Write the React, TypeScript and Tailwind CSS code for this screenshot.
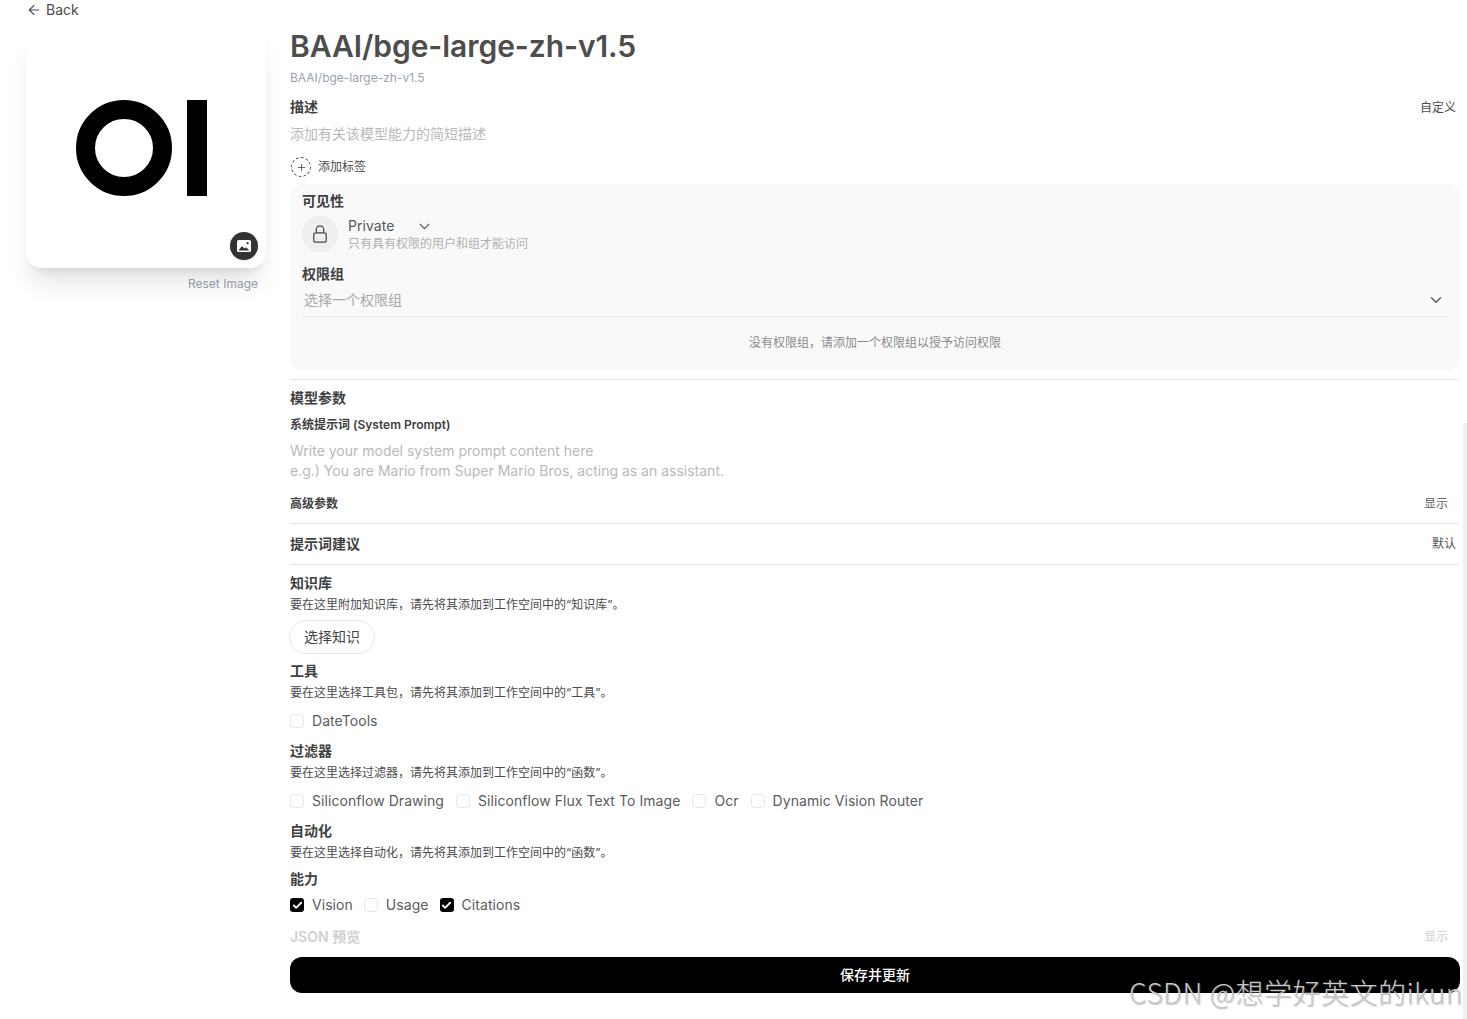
import { ArrowLeft, ChevronDown, Check, Plus } from "lucide-react"

const Heading = ({ className = "", children }: { className?: string; children: React.ReactNode }) => (
  <div className={`text-sm leading-5 font-semibold text-[#404040] ${className}`}>{children}</div>
)

const Desc = ({ children }: { children: React.ReactNode }) => (
  <div className="mt-1 text-xs leading-4 text-[#4b4b4b]">{children}</div>
)

function CheckItem({ label, checked = false }: { label: string; checked?: boolean }) {
  return (
    <label className="flex items-center gap-2">
      {checked ? (
        <span className="flex size-[14px] items-center justify-center rounded-[3px] bg-black text-white">
          <Check size={11} strokeWidth={4} />
        </span>
      ) : (
        <span className="size-[14px] rounded-[4px] border border-gray-200 bg-white" />
      )}
      <span className="text-sm leading-5 tracking-[0.06px] text-[#5b5b5b]">{label}</span>
    </label>
  )
}

export default function App() {
  return (
    <div className="relative h-[1019px] overflow-hidden bg-white font-['Inter','Noto_Sans_CJK_SC',sans-serif]">
      <div className="flex h-5 items-center gap-1 pl-[26px] text-sm text-[#4b4b4b]">
        <ArrowLeft size={16} strokeWidth={1.75} />
        <span>Back</span>
      </div>

      <div className="mt-2 flex gap-6 pr-[7px] pl-[26px]">
        {/* Avatar */}
        <div className="w-[240px] shrink-0">
          <div className="relative flex h-[240px] items-center justify-center rounded-2xl bg-white shadow-xl">
            <svg width="132" height="96" viewBox="0 0 132 96" className="mr-2">
              <circle cx="48" cy="48" r="38.5" fill="none" stroke="#000" strokeWidth="19" />
              <rect x="111" y="0" width="20" height="96" fill="#000" />
            </svg>
            <div className="absolute right-2 bottom-2 flex size-7 items-center justify-center rounded-full bg-[#333] shadow-sm">
              <svg width="18" height="18" viewBox="0 0 18 18">
                <rect x="2" y="3" width="14" height="12" rx="1.5" fill="#fff" />
                <path d="M3.5 13.5 7 9l2.4 2.6L11 10.2l3.5 3.3z" fill="#333" />
                <circle cx="12.6" cy="6.2" r="1.1" fill="#333" />
              </svg>
            </div>
          </div>
          <div className="mt-2 pr-2 text-right text-xs leading-4 text-gray-400">Reset Image</div>
        </div>

        {/* Form */}
        <div className="min-w-0 flex-1">
          <h1 className="text-3xl leading-9 font-semibold tracking-[-0.05px] text-[#4d4d4d]">BAAI/bge-large-zh-v1.5</h1>
          <div className="mt-1.5 text-xs leading-4 text-gray-400">BAAI/bge-large-zh-v1.5</div>

          <div className="mt-[11px] flex items-center justify-between">
            <Heading>描述</Heading>
            <span className="pt-0.5 pr-1 text-xs text-[#4b4b4b]">自定义</span>
          </div>
          <div className="mt-[7px] text-sm leading-5 text-[#b9b9b9]">添加有关该模型能力的简短描述</div>

          <div className="mt-[13px] flex h-5 items-center gap-[7px] pl-px">
            <span className="flex size-5 items-center justify-center rounded-full border border-dashed border-[#444] text-[#444]">
              <Plus size={11} strokeWidth={1.75} />
            </span>
            <span className="text-xs text-[#4b4b4b]">添加标签</span>
          </div>

          {/* Access */}
          <div className="mt-[7px] rounded-xl bg-[#f9f9f9] px-3 pt-[7px] pb-5">
            <Heading>可见性</Heading>
            <div className="mt-[5px] flex items-center gap-2.5">
              <div className="flex size-9 items-center justify-center rounded-full bg-[#eeeeee] text-[#444]">
                <svg width="20" height="20" viewBox="0 0 24 24" fill="none" stroke="currentColor" strokeWidth="1.5" strokeLinecap="round" strokeLinejoin="round">
                  <path d="M16.5 10.5V6.75a4.5 4.5 0 1 0-9 0v3.75m-.75 11.25h10.5a2.25 2.25 0 0 0 2.25-2.25v-6.75a2.25 2.25 0 0 0-2.25-2.25H6.75a2.25 2.25 0 0 0-2.25 2.25v6.75a2.25 2.25 0 0 0 2.25 2.25Z" />
                </svg>
              </div>
              <div>
                <div className="flex items-center">
                  <span className="w-[68px] text-sm leading-5 tracking-[0.06px] text-[#555]">Private</span>
                  <ChevronDown size={17} strokeWidth={1.75} className="text-[#4b5563]" />
                </div>
                <div className="text-xs leading-4 text-[#b0b0b0]">只有具有权限的用户和组才能访问</div>
              </div>
            </div>

            <Heading className="mt-3">权限组</Heading>
            <div className="mt-1.5 flex items-center justify-between border-b border-gray-200 pr-[3px] pb-1.5 pl-0.5">
              <span className="text-sm leading-5 text-[#a8a8a8]">选择一个权限组</span>
              <ChevronDown size={18} strokeWidth={1.75} className="text-[#4b5563]" />
            </div>
            <div className="mt-[18px] text-center text-xs leading-4 text-[#8a8a8a]">
              没有权限组，请添加一个权限组以授予访问权限
            </div>
          </div>

          <div className="mt-2 h-px bg-gray-200" />

          <Heading className="mt-2">模型参数</Heading>
          <div className="mt-[9px] text-xs leading-4 font-semibold text-[#404040]">系统提示词 (System Prompt)</div>
          <div className="mt-2 text-sm leading-5 text-[#b9b9b9]">
            <div>Write your model system prompt content here</div>
            <div>e.g.) You are Mario from Super Mario Bros, acting as an assistant.</div>
          </div>

          <div className="mt-[15px] flex items-center justify-between border-b border-gray-200 pb-[11px]">
            <span className="text-xs leading-4 font-semibold text-[#404040]">高级参数</span>
            <span className="pr-3 text-xs leading-4 text-[#666]">显示</span>
          </div>

          <div className="mt-2.5 flex items-center justify-between border-b border-gray-200 pb-2.5">
            <Heading>提示词建议</Heading>
            <span className="pr-1 text-xs leading-4 text-[#555]">默认</span>
          </div>

          <Heading className="mt-2">知识库</Heading>
          <Desc>要在这里附加知识库，请先将其添加到工作空间中的“知识库”。</Desc>
          <button className="mt-[7px] -ml-px h-[34px] rounded-full border border-gray-200 px-3.5 text-sm text-[#444]">选择知识</button>

          <Heading className="mt-[7px]">工具</Heading>
          <Desc>要在这里选择工具包，请先将其添加到工作空间中的“工具”。</Desc>
          <div className="mt-2.5 flex gap-3">
            <CheckItem label="DateTools" />
          </div>

          <Heading className="mt-2.5">过滤器</Heading>
          <Desc>要在这里选择过滤器，请先将其添加到工作空间中的“函数”。</Desc>
          <div className="mt-2.5 flex gap-3">
            <CheckItem label="Siliconflow Drawing" />
            <CheckItem label="Siliconflow Flux Text To Image" />
            <CheckItem label="Ocr" />
            <CheckItem label="Dynamic Vision Router" />
          </div>

          <Heading className="mt-2.5">自动化</Heading>
          <Desc>要在这里选择自动化，请先将其添加到工作空间中的“函数”。</Desc>

          <Heading className="mt-2">能力</Heading>
          <div className="mt-1.5 flex gap-[11px]">
            <CheckItem label="Vision" checked />
            <CheckItem label="Usage" />
            <CheckItem label="Citations" checked />
          </div>

          <div className="mt-3 flex items-center justify-between">
            <span className="text-sm leading-5 font-semibold text-[#d0d0d0]">JSON 预览</span>
            <span className="pr-3 text-xs leading-4 text-[#d0d0d0]">显示</span>
          </div>

          <button className="mt-2.5 h-9 w-full rounded-xl bg-black text-sm font-medium text-white">保存并更新</button>
        </div>
      </div>

      {/* scrollbar */}
      <div className="absolute top-[423px] right-0 bottom-0 w-1 bg-[#f1f1f1]" />

      {/* watermark */}
      <div className="absolute top-[972px] left-[1129px] font-['Noto_Sans_CJK_SC',sans-serif] text-[28px] leading-10 font-light tracking-[0.5px] whitespace-nowrap text-[#c9c9c9] [text-shadow:1px_1px_1px_rgba(120,120,120,0.45)]">
        CSDN @想学好英文的ikun
      </div>
    </div>
  )
}
